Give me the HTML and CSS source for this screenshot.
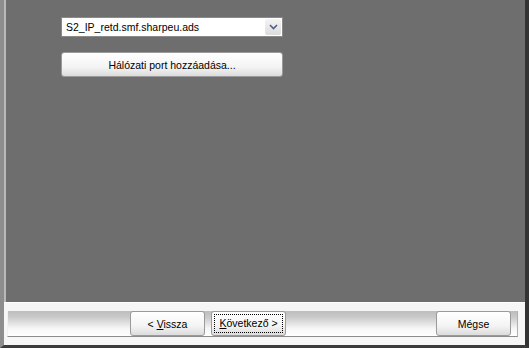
FILE: index.html
```html
<!DOCTYPE html>
<html lang="hu">
<head>
    <meta charset="UTF-8">
    <title>Nyomtató port</title>
    <link rel="stylesheet" href="styles.css">
</head>
<body>
    <div class="window">
        <div class="main">
            <div class="port-panel">
                <div class="combo">
                    <span class="combo-text">S2_IP_retd.smf.sharpeu.ads</span>
                    <span class="combo-arrow">
                        <svg width="9" height="6" viewBox="0 0 9 6"><path d="M1 1 L4.5 4.5 L8 1" fill="none" stroke="#4d6185" stroke-width="1.6"/></svg>
                    </span>
                </div>
                <button class="btn btn-wide">Hálózati port hozzáadása...</button>
            </div>
        </div>
        <div class="footer">
            <div class="button-bar">
                <button class="btn btn-nav">&lt; <u>V</u>issza</button>
                <button class="btn btn-nav btn-focus"><span class="focus-ring"><u>K</u>övetkező &gt;</span></button>
                <div class="spacer"></div>
                <button class="btn btn-nav">Mégse</button>
            </div>
        </div>
    </div>
</body>
</html>
```

FILE: styles.css
```css
* {
    margin: 0;
    padding: 0;
    box-sizing: border-box;
}

body {
    width: 529px;
    height: 348px;
    overflow: hidden;
    background-color: #6f6e6e;
    font-family: "Liberation Sans", Arial, sans-serif;
    font-size: 10.5px;
    color: #000;
}

.window {
    display: flex;
    flex-direction: column;
    height: 348px;
    border-left: 4px solid #8e8d8d;
    border-right: 4px solid #333;
    border-bottom: 3px solid #3c3c3c;
}

.main {
    flex: 1;
    border-left: 2px solid #b9b9b9;
    background-color: #6f6e6e;
}

.port-panel {
    width: 222px;
    margin: 17px 0 0 55px;
    display: flex;
    flex-direction: column;
    gap: 15px;
}

.combo {
    height: 20px;
    display: flex;
    align-items: center;
    background-color: #fff;
    border: 1px solid #8a8a8a;
}

.combo-text {
    flex: 1;
    padding-left: 4px;
}

.combo-arrow {
    width: 16px;
    height: 16px;
    margin-right: 1px;
    display: flex;
    align-items: center;
    justify-content: center;
    background: linear-gradient(#f4f4f4, #dcdcdc);
    border-radius: 2px;
}

.btn {
    font-family: "Liberation Sans", Arial, sans-serif;
    font-size: 10.5px;
    color: #000;
    background: linear-gradient(#ffffff 0%, #f4f4f4 60%, #dcdcdc 100%);
    border: 1px solid #9a9a9a;
    border-radius: 3px;
    cursor: pointer;
}

.btn-wide {
    height: 25px;
    width: 222px;
}

.footer {
    height: 43px;
    background-color: #f6f6f6;
    border-top: 1px solid #fff;
    padding: 8px 7px 0 3px;
}

.button-bar {
    height: 26px;
    display: flex;
    align-items: stretch;
    gap: 6px;
    padding-left: 122px;
    padding-right: 6px;
    background: linear-gradient(#bdbdbd 0%, #cacaca 25%, #f6f6f6 70%, #ffffff 100%);
    border-left: 1px solid #f0f0f0;
    border-right: 1px solid #b0b0b0;
    border-bottom: 1px solid #8c8c8c;
}

.btn-nav {
    width: 75px;
}

.btn-focus {
    padding: 2px;
}

.focus-ring {
    display: block;
    height: 100%;
    line-height: 17px;
    border: 1px dotted #000;
}

.spacer {
    flex: 1;
}
```
